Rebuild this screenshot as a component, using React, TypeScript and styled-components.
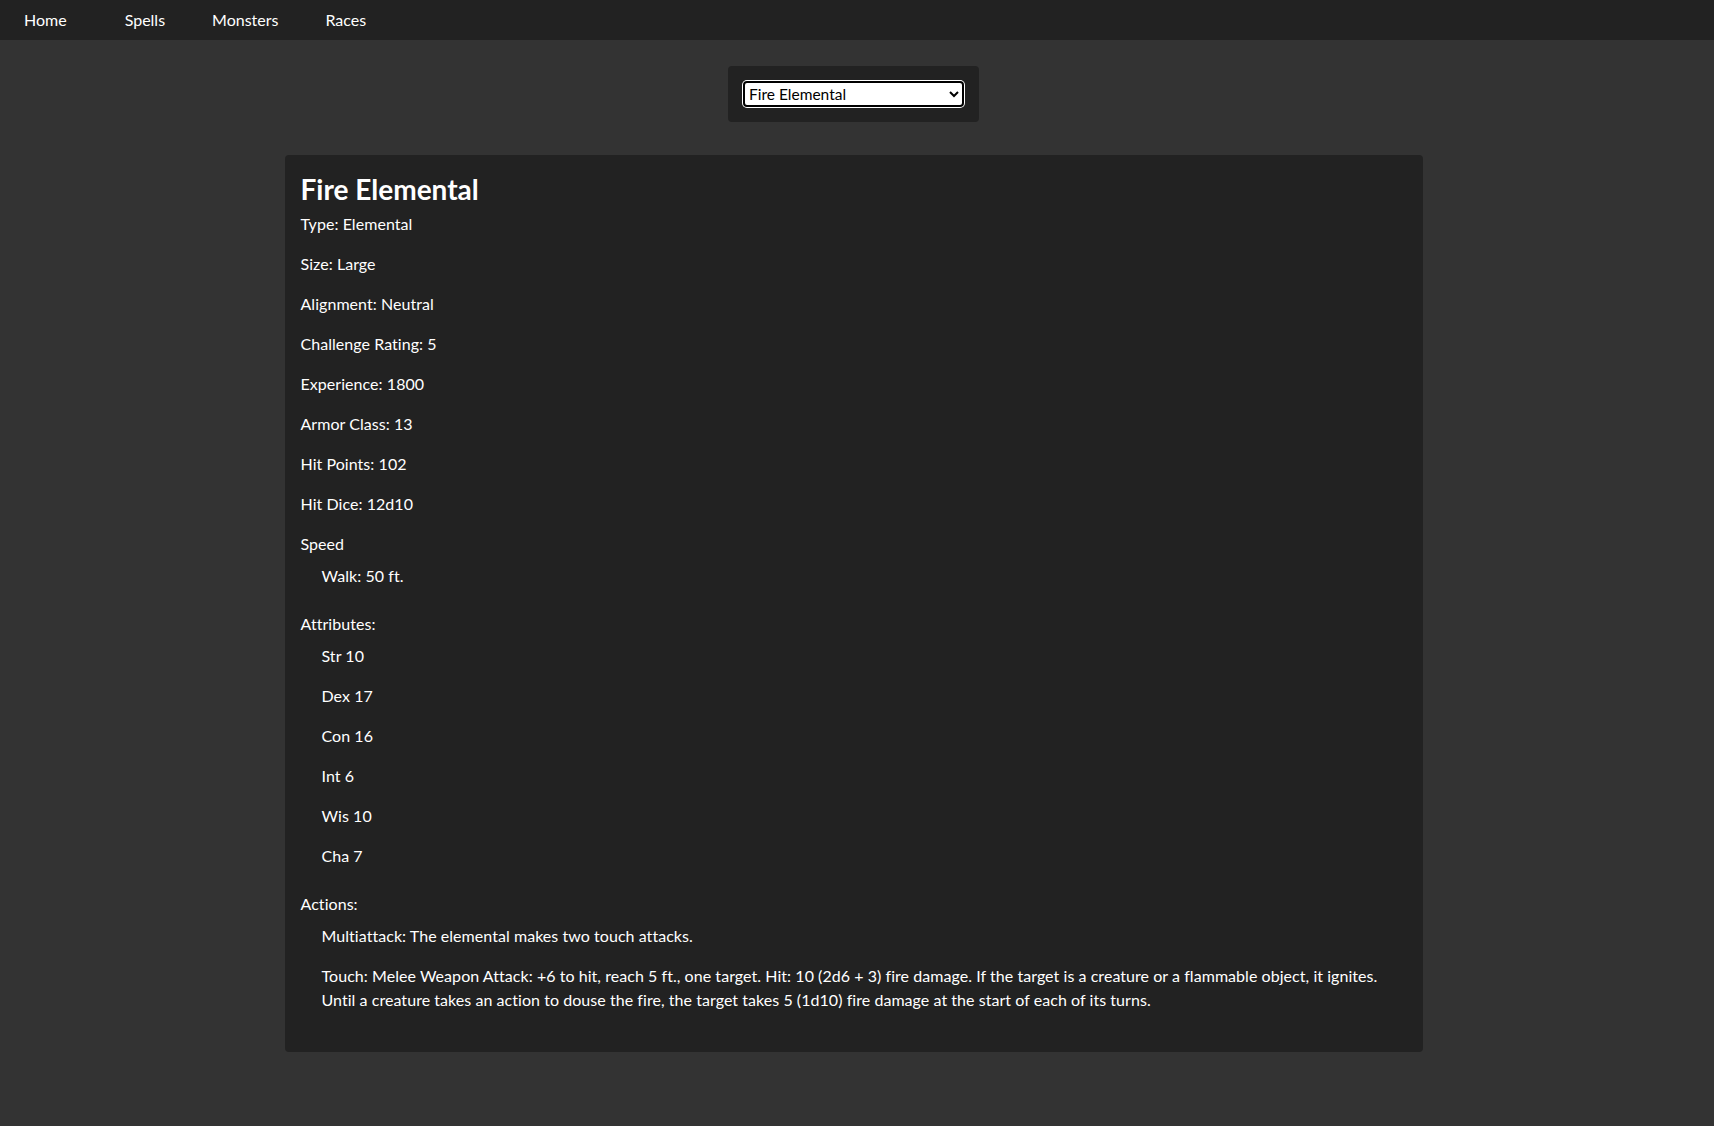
import styled, { createGlobalStyle } from 'styled-components'

const GlobalStyle = createGlobalStyle`
    html, body {
        margin: 0;
        padding: 0;
        background: #333333;
        color: #ffffff;
        font-family: Lato, "Open Sans", "Liberation Sans", sans-serif;
        font-size: 16px;
    }
`

const monster = {
    name: 'Fire Elemental',
    fields: [
        ['Type', 'Elemental'],
        ['Size', 'Large'],
        ['Alignment', 'Neutral'],
        ['Challenge Rating', '5'],
        ['Experience', '1800'],
        ['Armor Class', '13'],
        ['Hit Points', '102'],
        ['Hit Dice', '12d10'],
    ],
    speed: ['Walk: 50 ft.'],
    attributes: ['Str 10', 'Dex 17', 'Con 16', 'Int 6', 'Wis 10', 'Cha 7'],
    actions: [
        'Multiattack: The elemental makes two touch attacks.',
        'Touch: Melee Weapon Attack: +6 to hit, reach 5 ft., one target. Hit: 10 (2d6 + 3) fire damage. If the target is a creature or a flammable object, it ignites. Until a creature takes an action to douse the fire, the target takes 5 (1d10) fire damage at the start of each of its turns.',
    ],
}

const links = ['Home', 'Spells', 'Monsters', 'Races']

const App = () => {
    return <Page>
        <GlobalStyle />
        <NavBar>
            {links.map((l, i) => (
                <NavLink key={l} href="#" $first={i === 0}>{l}</NavLink>
            ))}
        </NavBar>
        <Main>
            <Picker>
                <Select defaultValue="fire-elemental">
                    <option value="fire-elemental">Fire Elemental</option>
                    <option value="air-elemental">Air Elemental</option>
                    <option value="earth-elemental">Earth Elemental</option>
                </Select>
            </Picker>
            <Card>
                <Title>{monster.name}</Title>
                {monster.fields.map(([k, v]) => (
                    <Field key={k}>{k}: {v}</Field>
                ))}
                <Section>
                    <Label>Speed</Label>
                    <List>
                        {monster.speed.map(s => <Item key={s}>{s}</Item>)}
                    </List>
                </Section>
                <Section>
                    <Label>Attributes:</Label>
                    <List>
                        {monster.attributes.map(a => <Item key={a}>{a}</Item>)}
                    </List>
                </Section>
                <Section>
                    <Label>Actions:</Label>
                    <List>
                        {monster.actions.map(a => <Item key={a}>{a}</Item>)}
                    </List>
                </Section>
            </Card>
        </Main>
    </Page>
}

export default App

const Page = styled.div`
    min-height: 100vh;
    background: #333333;
`

const NavBar = styled.nav`
    height: 40px;
    background: #222222;
    display: flex;
    align-items: center;
    padding-left: 0.5px;
`

const NavLink = styled.a<{ $first?: boolean }>`
    color: #ffffff;
    text-decoration: none;
    padding: 0 23.5px;
    margin-right: ${p => (p.$first ? '11px' : '0')};
    line-height: 40px;
`

const Main = styled.main`
    width: calc(100% - 7px);
    display: flex;
    flex-direction: column;
    align-items: center;
    padding: 26px 0 60px;
`

const Picker = styled.div`
    background: #222222;
    border-radius: 4px;
    padding: 15px;
    margin-bottom: 33px;
`

const Select = styled.select`
    width: 221px;
    height: 26px;
    display: block;
    background: #ffffff;
    color: #000000;
    border: 2px solid #000000;
    border-radius: 4px;
    box-shadow: 0 0 0 1px #ffffff;
    font-family: Lato, "Open Sans", sans-serif;
    font-size: 15.5px;
    padding: 0;
`

const Card = styled.section`
    width: 66.667%;
    box-sizing: border-box;
    background: #222222;
    border-radius: 4px;
    padding: 17px 16px 16px;
    display: flex;
    flex-direction: column;
    letter-spacing: 0.05px;
`

const Title = styled.h1`
    font-size: 28px;
    line-height: 34px;
    font-weight: 700;
    letter-spacing: 0;
    margin: 0 0 6px;
`

const Field = styled.p`
    margin: 0 0 16px;
    line-height: 24px;
`

const Section = styled.div`
    margin-bottom: 24px;
`

const Label = styled.div`
    line-height: 24px;
`

const List = styled.div`
    margin-top: 8px;
    padding-left: 21px;
    display: flex;
    flex-direction: column;
    gap: 16px;
`

const Item = styled.p`
    margin: 0;
    line-height: 24px;
`
